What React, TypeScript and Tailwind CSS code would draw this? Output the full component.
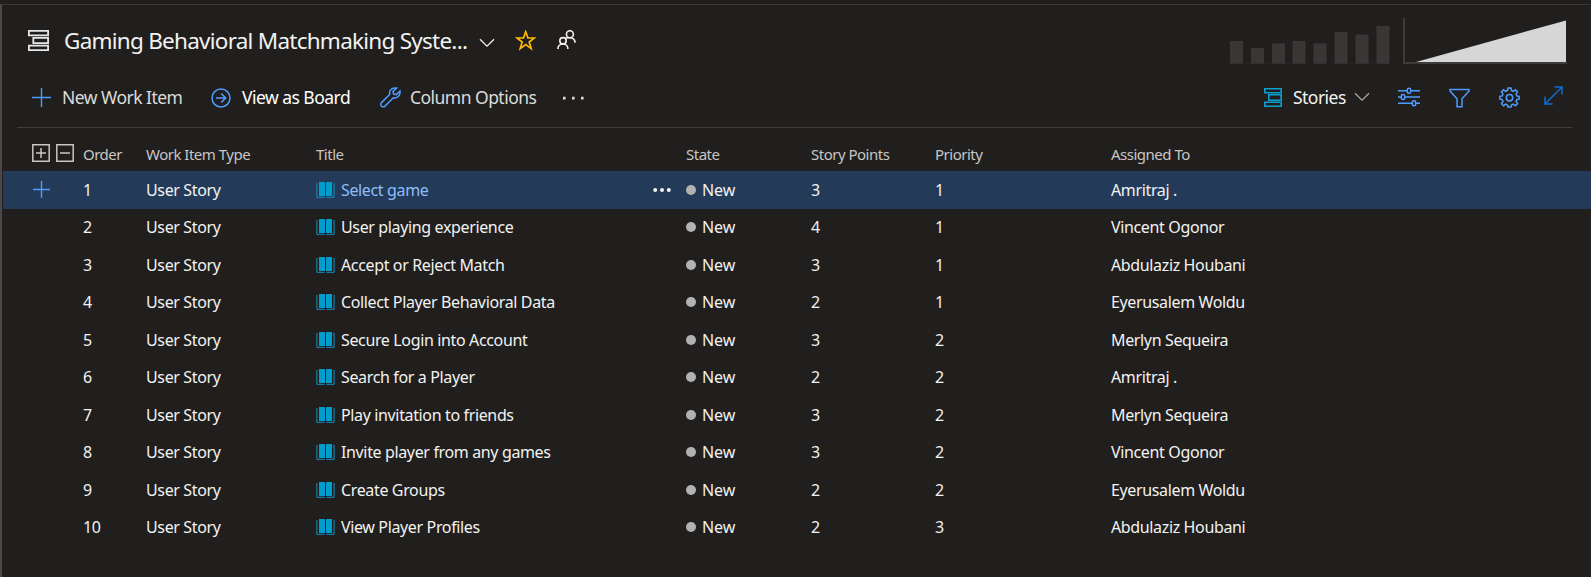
import type { ReactNode } from "react";

type Item = { title: string; points: number; priority: number; assignee: string };

const items: Item[] = [
  { title: "Select game", points: 3, priority: 1, assignee: "Amritraj ." },
  { title: "User playing experience", points: 4, priority: 1, assignee: "Vincent Ogonor" },
  { title: "Accept or Reject Match", points: 3, priority: 1, assignee: "Abdulaziz Houbani" },
  { title: "Collect Player Behavioral Data", points: 2, priority: 1, assignee: "Eyerusalem Woldu" },
  { title: "Secure Login into Account", points: 3, priority: 2, assignee: "Merlyn Sequeira" },
  { title: "Search for a Player", points: 2, priority: 2, assignee: "Amritraj ." },
  { title: "Play invitation to friends", points: 3, priority: 2, assignee: "Merlyn Sequeira" },
  { title: "Invite player from any games", points: 3, priority: 2, assignee: "Vincent Ogonor" },
  { title: "Create Groups", points: 2, priority: 2, assignee: "Eyerusalem Woldu" },
  { title: "View Player Profiles", points: 2, priority: 3, assignee: "Abdulaziz Houbani" },
];

const columns =
  "grid grid-cols-[80px_63px_170px_370px_125px_124px_176px_1fr] items-center";

function Icon({ w, h, className, children }: { w: number; h: number; className?: string; children: ReactNode }) {
  return (
    <svg width={w} height={h} viewBox={`0 0 ${w} ${h}`} fill="none" stroke="currentColor" className={`shrink-0 ${className ?? ""}`}>
      {children}
    </svg>
  );
}

function BacklogIcon() {
  return (
    <Icon w={21} h={21} className="text-[#e8e8e8]">
      <path strokeWidth="1.8" d="M.9.9h19.200v4.400H.9zM5.300 7.900h14.800v5.200h-14.800zM.9 15.700h19.200v4.400H.9z" />
    </Icon>
  );
}

function StoriesIcon() {
  return (
    <Icon w={18} h={19} className="-mt-px text-[#0ba0d0]">
      <path strokeWidth="1.6" d="M.8.8h16.400v4H.8zM4.800 6.800h12.400v5.400H4.800zM.8 14.200h16.400v4H.8z" />
    </Icon>
  );
}

function Chevron() {
  return (
    <Icon w={16} h={10}>
      <path strokeWidth="1.3" d="M1 1.2l7 7 7-7" />
    </Icon>
  );
}

function Plus({ size }: { size: 17 | 19 }) {
  return (
    <Icon w={size} h={size} className="text-[#4f9bff]">
      <path strokeWidth="1.4" d={size === 19 ? "M9.5 0v19M0 9.5h19" : "M8.5 0v17M0 8.5h17"} />
    </Icon>
  );
}

function BookIcon() {
  return (
    <Icon w={19} h={16}>
      <path fill="#009ccc" stroke="none" d="M3 0h5a1 1 0 0 1 1 1v13H3zM10 1a1 1 0 0 1 1-1h5v14h-6z" />
      <path stroke="#0f93c8" d="M.9 1v14.3H8.6M18.1 1v14.3H10.4" />
    </Icon>
  );
}

function Burnup() {
  return (
    <Icon w={338} h={46}>
      <g fill="#383736" stroke="none">
        <path d="M0 23h13v23H0zM21 30h13v16H21zM42 25.5h13V46H42zM62.500 23h13v23h-13zM83.500 25.500h13V46h-13zM104.500 14h13v32h-13zM125.500 16.500h13V46h-13zM146.500 8h13v38h-13z" />
        <path fill="#2a2928" d="M0 45.500h160v1H0z" />
        <path fill="#3d3c3b" d="M173 0h2v44h162v2H173z" />
        <path fill="#d6d6d6" d="M186 44L336 2.500V44z" />
      </g>
    </Icon>
  );
}

function Header() {
  return (
    <header className="flex h-[65px] items-start pl-[26px] pr-[23px] text-[#f3f2f1]">
      <div className="pt-[25px]"><BacklogIcon /></div>
      <h1 className="ml-[15px] mt-[20px] w-[405px] whitespace-nowrap text-[22.500px] leading-8 tracking-[-0.750px]">
        Gaming Behavioral Matchmaking Syste...
      </h1>
      <div className="ml-[10px] pt-[33px]"><Chevron /></div>
      <Icon w={21} h={21} className="ml-[20px] mt-[25px] text-[#ffb900]">
        <path strokeWidth="1.700" d="M10.700 1.800l2.200 6.200h6.500l-5.200 4 2 6.600-5.500-4-5.500 4 2-6.600-5.200-4h6.500z" />
      </Icon>
      <Icon w={19} h={20} className="ml-[21px] mt-[25px]">
        <g strokeWidth="1.600">
          <circle cx="12.900" cy="4.300" r="3.500" />
          <circle cx="6" cy="10.800" r="3.200" />
          <path d="M.9 19c0-3 2.200-5 5-5s5 2 5 5M8.300 8.600c1-.8 2.600-1 4.600-.8 3 .2 5.200 2 5.200 5" />
        </g>
      </Icon>
      <div className="ml-auto pt-[13px]"><Burnup /></div>
    </header>
  );
}

function Toolbar() {
  return (
    <nav className="ml-[15px] mr-[19px] flex h-[58px] items-center border-b border-[#3f3e3d] pb-px pl-[15px] pr-[9px] text-[17.500px] tracking-[-0.530px] text-[#dcdbda] whitespace-nowrap">
      <div className="-mt-px"><Plus size={19} /></div>
      <span className="-mt-px ml-[11px] w-[121px]">New Work Item</span>
      <Icon w={20} h={20} className="ml-[28px] text-[#4f9bff]">
        <path strokeWidth="1.500" d="M5 10h9.500M10.300 5.600l4.400 4.400-4.400 4.400" />
        <circle cx="10" cy="10" r="9" strokeWidth="1.500" />
      </Icon>
      <span className="-mt-px ml-[11px] w-[110px] text-white">View as Board</span>
      <Icon w={21} h={21} className="-mt-px ml-[28px] text-[#4f9bff]">
        <path strokeWidth="1.500" d="M14.700 1c-3.500 0-5.800 2.900-4.900 6.300L1.500 15.600c-1 1-1 2.500 0 3.500s2.500 1 3.500 0l8.300-8.300c3.800.9 7.300-2.200 6.700-6.700l-3.700 3.500-2.700-.6-.6-2.500 3.600-3.400z" />
      </Icon>
      <span className="-mt-px ml-[9px] w-[128px]">Column Options</span>
      <Icon w={22} h={4} className="ml-[25px]">
        <path fill="currentColor" stroke="none" d="M0 .8h2.600v2.600H0zM9 .8h2.600v2.600H9zM18 .8h2.600v2.600H18z" />
      </Icon>
      <div className="ml-auto flex items-center">
        <StoriesIcon />
        <span className="-mt-px ml-[11px] w-[53px] text-[#f3f2f1]">Stories</span>
        <span className="-mt-[3px] ml-[8px] text-[#a9a8a7]"><Chevron /></span>
        <Icon w={22} h={20} className="-mt-[3px] ml-[28px] text-[#4f9bff]">
          <g strokeWidth="1.500">
            <path d="M0 3.800h9M13 3.800h9M0 10h3M7 10h15M0 16.200h14M18 16.200h4" />
            <rect x="9.300" y="1.200" width="3.400" height="5" rx="1.500" />
            <rect x="3.300" y="7.500" width="3.400" height="5" rx="1.500" />
            <rect x="14.300" y="13.700" width="3.400" height="5" rx="1.500" />
          </g>
        </Icon>
        <Icon w={21} h={20} className="-mt-px ml-[29px] text-[#4f9bff]">
          <path strokeWidth="1.500" d="M1 1.500h19v1.500L13 10.700v8H8v-8L1 3z" />
        </Icon>
        <Icon w={21} h={21} className="-mt-[2px] ml-[29px] text-[#4f9bff]">
          <g strokeWidth="1.500">
            <path d="M9 1h3l.5 2.500 1.800.8 2.200-1.500 2 2.100-1.500 2.200.8 1.800 2.300.5v2.700l-2.300.5-.8 1.900 1.500 2.200-2 2-2.200-1.500-1.800.8L12 20H9l-.5-2-1.800-.8-2.200 1.500-2-2L4 14.500l-.8-1.900L.9 12.100V9.400l2.300-.5L4 7.100 2.500 4.900l2-2.100 2.200 1.500 1.800-.8z" />
            <circle cx="10.500" cy="10.700" r="3.200" />
          </g>
        </Icon>
        <Icon w={19} h={19} className="-mt-[6px] ml-[24px] text-[#0b6fd0]">
          <path strokeWidth="1.500" d="M1.500 17.500l16-16M10.500 1h7.500v7.500M1 10.500V18h7.500" />
        </Icon>
      </div>
    </nav>
  );
}

function HeadRow() {
  return (
    <div className={`${columns} h-[43px] pt-[9px] text-[15px] tracking-[-0.500px] text-[#c8c6c4]`}>
      <div className="-mt-[3px] flex gap-[6px] pl-[28.500px]">
        <Icon w={18} h={18}>
          <path strokeWidth="1.500" d="M.8.800h16.400v16.400H.8zM4 9h10M9 4v10" />
        </Icon>
        <Icon w={18} h={18}>
          <path strokeWidth="1.500" d="M.8.800h16.400v16.400H.8zM4 9h10" />
        </Icon>
      </div>
      <span>Order</span>
      <span>Work Item Type</span>
      <span>Title</span>
      <span>State</span>
      <span>Story Points</span>
      <span>Priority</span>
      <span>Assigned To</span>
    </div>
  );
}

function Row({ item, index }: { item: Item; index: number }) {
  const active = index === 0;
  return (
    <div className={`${columns} h-[37.500px] text-[16px] tracking-[-0.360px] text-[#f3f2f1] whitespace-nowrap ${active ? "bg-[#233a58]" : ""}`}>
      <div className="pl-[30px]">{active && <Plus size={17} />}</div>
      <span>{index + 1}</span>
      <span>User Story</span>
      <div className="flex items-center gap-[6px]">
        <BookIcon />
        <span className={active ? "text-[#8ebdfa]" : ""}>{item.title}</span>
        {active && (
          <Icon w={18} h={4} className="ml-auto mr-[15px]">
            <g fill="currentColor" stroke="none">
              <circle cx="2.200" cy="2" r="2" />
              <circle cx="9" cy="2" r="2" />
              <circle cx="15.800" cy="2" r="2" />
            </g>
          </Icon>
        )}
      </div>
      <div className="flex items-center gap-[6px]">
        <i className="size-[10px] rounded-full bg-[#b2b2b2]" />
        <span className="tracking-[-0.100px]">New</span>
      </div>
      <span>{item.points}</span>
      <span>{item.priority}</span>
      <span>{item.assignee}</span>
    </div>
  );
}

export default function App() {
  return (
    <div className="flex h-[577px] w-[1591px] flex-col overflow-hidden bg-[#201f1e] pt-1 font-['Noto_Sans','Open_Sans',sans-serif]">
      <main className="flex-1 border-l-2 border-t border-l-[#4a4948] border-t-[#3a3938]">
        <Header />
        <Toolbar />
        <section className="pl-px">
          <HeadRow />
          {items.map((item, i) => (
            <Row key={i} item={item} index={i} />
          ))}
        </section>
      </main>
    </div>
  );
}
